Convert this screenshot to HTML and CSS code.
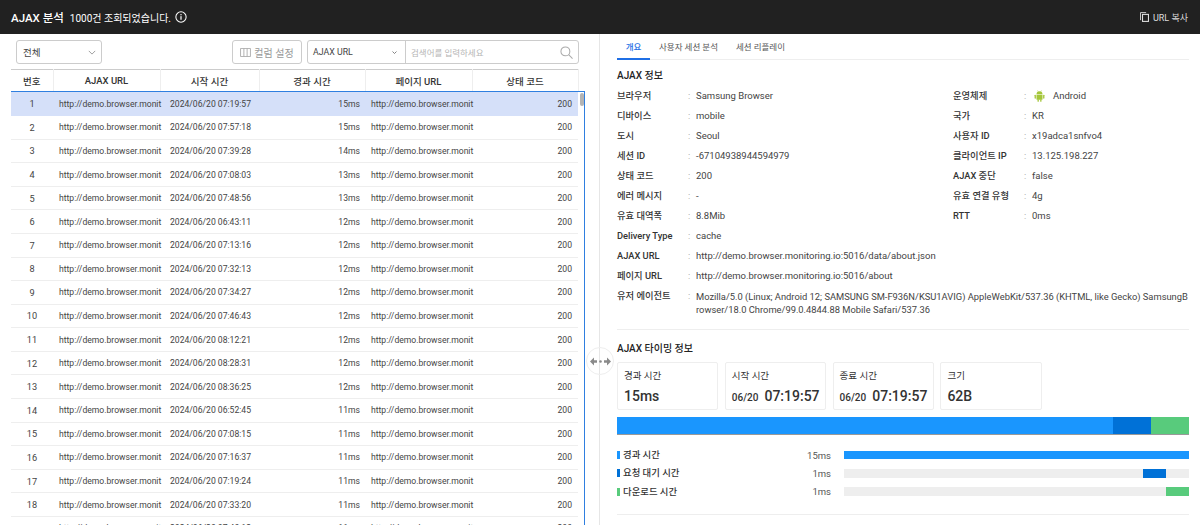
FILE: index.html
```html
<!DOCTYPE html>
<html lang="ko">
<head>
    <meta charset="UTF-8">
    <meta name="viewport" content="width=device-width, initial-scale=1.0">
    <title>AJAX 분석</title>
    <link rel="stylesheet" href="styles.css">
</head>
<body>
    <header class="topbar">
        <div class="topbar-left">
            <h1>AJAX 분석</h1>
            <span class="topbar-count">1000건 조회되었습니다.</span>
            <svg class="info-icon" viewBox="0 0 14 14" width="12" height="12"><circle cx="7" cy="7" r="6" fill="none" stroke="#fff" stroke-width="1.2"/><rect x="6.3" y="6" width="1.4" height="4.2" fill="#fff"/><rect x="6.3" y="3.6" width="1.4" height="1.4" fill="#fff"/></svg>
        </div>
        <button class="copy-button">
            <svg viewBox="0 0 10 11" width="9" height="10"><path d="M.6 9V.6h6.2" fill="none" stroke="#ddd" stroke-width="1"/><rect x="2.8" y="2.6" width="6.6" height="7.8" fill="none" stroke="#ddd" stroke-width="1.2"/></svg>
            URL 복사
        </button>
    </header>

    <div class="layout">
        <section class="left-pane">
            <div class="toolbar">
                <div class="select select-all">전체
                    <svg viewBox="0 0 10 6" width="8" height="5"><path d="M1 1l4 4 4-4" fill="none" stroke="#888"/></svg>
                </div>
                <button class="column-button">
                    <svg viewBox="0 0 12 10" width="11" height="9"><path d="M.5.5h11v9H.5zM4.2.5v9M7.8.5v9" fill="none" stroke="#aaa"/></svg>
                    컬럼 설정
                </button>
                <div class="search-group">
                    <div class="search-type">AJAX URL
                        <svg viewBox="0 0 10 6" width="5" height="3"><path d="M1 1l4 4 4-4" fill="none" stroke="#666" stroke-width="1.6"/></svg>
                    </div>
                    <div class="search-input">검색어를 입력하세요
                        <svg viewBox="0 0 14 14" width="13" height="13"><circle cx="5.8" cy="5.8" r="4.8" fill="none" stroke="#aaa" stroke-width="1.1"/><path d="M9.3 9.3l4.2 4.2" stroke="#aaa" stroke-width="1.1"/></svg>
                    </div>
                </div>
            </div>

            <div class="grid-wrap">
                <table class="grid-head">
                    <tr><th class="col-no">번호</th><th class="col-url">AJAX URL</th><th class="col-time">시작 시간</th><th class="col-ms">경과 시간</th><th class="col-url">페이지 URL</th><th class="col-code">상태 코드</th></tr>
                </table>
                <div class="grid-body">
                    <table class="grid-rows">
                        <tr class="selected"><td class="col-no">1</td><td class="col-url">http://demo.browser.monit</td><td class="col-time">2024/06/20 07:19:57</td><td class="col-ms">15ms</td><td class="col-url">http://demo.browser.monit</td><td class="col-code">200</td></tr>
                        <tr><td class="col-no">2</td><td class="col-url">http://demo.browser.monit</td><td class="col-time">2024/06/20 07:57:18</td><td class="col-ms">15ms</td><td class="col-url">http://demo.browser.monit</td><td class="col-code">200</td></tr>
                        <tr><td class="col-no">3</td><td class="col-url">http://demo.browser.monit</td><td class="col-time">2024/06/20 07:39:28</td><td class="col-ms">14ms</td><td class="col-url">http://demo.browser.monit</td><td class="col-code">200</td></tr>
                        <tr><td class="col-no">4</td><td class="col-url">http://demo.browser.monit</td><td class="col-time">2024/06/20 07:08:03</td><td class="col-ms">13ms</td><td class="col-url">http://demo.browser.monit</td><td class="col-code">200</td></tr>
                        <tr><td class="col-no">5</td><td class="col-url">http://demo.browser.monit</td><td class="col-time">2024/06/20 07:48:56</td><td class="col-ms">13ms</td><td class="col-url">http://demo.browser.monit</td><td class="col-code">200</td></tr>
                        <tr><td class="col-no">6</td><td class="col-url">http://demo.browser.monit</td><td class="col-time">2024/06/20 06:43:11</td><td class="col-ms">12ms</td><td class="col-url">http://demo.browser.monit</td><td class="col-code">200</td></tr>
                        <tr><td class="col-no">7</td><td class="col-url">http://demo.browser.monit</td><td class="col-time">2024/06/20 07:13:16</td><td class="col-ms">12ms</td><td class="col-url">http://demo.browser.monit</td><td class="col-code">200</td></tr>
                        <tr><td class="col-no">8</td><td class="col-url">http://demo.browser.monit</td><td class="col-time">2024/06/20 07:32:13</td><td class="col-ms">12ms</td><td class="col-url">http://demo.browser.monit</td><td class="col-code">200</td></tr>
                        <tr><td class="col-no">9</td><td class="col-url">http://demo.browser.monit</td><td class="col-time">2024/06/20 07:34:27</td><td class="col-ms">12ms</td><td class="col-url">http://demo.browser.monit</td><td class="col-code">200</td></tr>
                        <tr><td class="col-no">10</td><td class="col-url">http://demo.browser.monit</td><td class="col-time">2024/06/20 07:46:43</td><td class="col-ms">12ms</td><td class="col-url">http://demo.browser.monit</td><td class="col-code">200</td></tr>
                        <tr><td class="col-no">11</td><td class="col-url">http://demo.browser.monit</td><td class="col-time">2024/06/20 08:12:21</td><td class="col-ms">12ms</td><td class="col-url">http://demo.browser.monit</td><td class="col-code">200</td></tr>
                        <tr><td class="col-no">12</td><td class="col-url">http://demo.browser.monit</td><td class="col-time">2024/06/20 08:28:31</td><td class="col-ms">12ms</td><td class="col-url">http://demo.browser.monit</td><td class="col-code">200</td></tr>
                        <tr><td class="col-no">13</td><td class="col-url">http://demo.browser.monit</td><td class="col-time">2024/06/20 08:36:25</td><td class="col-ms">12ms</td><td class="col-url">http://demo.browser.monit</td><td class="col-code">200</td></tr>
                        <tr><td class="col-no">14</td><td class="col-url">http://demo.browser.monit</td><td class="col-time">2024/06/20 06:52:45</td><td class="col-ms">11ms</td><td class="col-url">http://demo.browser.monit</td><td class="col-code">200</td></tr>
                        <tr><td class="col-no">15</td><td class="col-url">http://demo.browser.monit</td><td class="col-time">2024/06/20 07:08:15</td><td class="col-ms">11ms</td><td class="col-url">http://demo.browser.monit</td><td class="col-code">200</td></tr>
                        <tr><td class="col-no">16</td><td class="col-url">http://demo.browser.monit</td><td class="col-time">2024/06/20 07:16:37</td><td class="col-ms">11ms</td><td class="col-url">http://demo.browser.monit</td><td class="col-code">200</td></tr>
                        <tr><td class="col-no">17</td><td class="col-url">http://demo.browser.monit</td><td class="col-time">2024/06/20 07:19:24</td><td class="col-ms">11ms</td><td class="col-url">http://demo.browser.monit</td><td class="col-code">200</td></tr>
                        <tr><td class="col-no">18</td><td class="col-url">http://demo.browser.monit</td><td class="col-time">2024/06/20 07:33:20</td><td class="col-ms">11ms</td><td class="col-url">http://demo.browser.monit</td><td class="col-code">200</td></tr>
                        <tr><td class="col-no">19</td><td class="col-url">http://demo.browser.monit</td><td class="col-time">2024/06/20 07:40:12</td><td class="col-ms">11ms</td><td class="col-url">http://demo.browser.monit</td><td class="col-code">200</td></tr>
                    </table>
                    <div class="scroll-thumb"></div>
                </div>
            </div>
        </section>

        <div class="splitter">
            <div class="splitter-handle">
                <svg viewBox="0 0 21 9" width="21" height="9"><path d="M0 4.5l4-4v2.7h3v2.6H4v2.7zM21 4.5l-4-4v2.7h-3v2.6h3v2.7z" fill="#8a8a8a"/><circle cx="10.5" cy="4.5" r="1.3" fill="#8a8a8a"/></svg>
            </div>
        </div>

        <section class="right-pane">
            <nav class="tabs">
                <a class="tab active">개요</a>
                <a class="tab">사용자 세션 분석</a>
                <a class="tab">세션 리플레이</a>
            </nav>

            <h2 class="section-title">AJAX 정보</h2>
            <div class="info-grid">
                <div class="info-row"><span class="info-label">브라우저</span><span class="info-value">Samsung Browser</span></div>
                <div class="info-row"><span class="info-label">운영체제</span><span class="info-value">
                    <svg class="android-icon" viewBox="0 0 16 18" width="11" height="12"><path d="M5 .6l1.2 2M11 .6L9.8 2.6" stroke="#a4c639" stroke-width=".7"/><path d="M3.5 6.2a4.5 4.5 0 0 1 9 0z" fill="#a4c639"/><path d="M3.5 7h9v6.8a1 1 0 0 1-1 1h-7a1 1 0 0 1-1-1z" fill="#a4c639"/><rect x="0.6" y="7" width="2" height="6" rx="1" fill="#a4c639"/><rect x="13.4" y="7" width="2" height="6" rx="1" fill="#a4c639"/><rect x="5" y="14" width="2" height="3.8" rx="1" fill="#a4c639"/><rect x="9" y="14" width="2" height="3.8" rx="1" fill="#a4c639"/></svg>
                    Android</span></div>
                <div class="info-row"><span class="info-label">디바이스</span><span class="info-value">mobile</span></div>
                <div class="info-row"><span class="info-label">국가</span><span class="info-value">KR</span></div>
                <div class="info-row"><span class="info-label">도시</span><span class="info-value">Seoul</span></div>
                <div class="info-row"><span class="info-label">사용자 ID</span><span class="info-value">x19adca1snfvo4</span></div>
                <div class="info-row"><span class="info-label">세션 ID</span><span class="info-value">-67104938944594979</span></div>
                <div class="info-row"><span class="info-label">클라이언트 IP</span><span class="info-value">13.125.198.227</span></div>
                <div class="info-row"><span class="info-label">상태 코드</span><span class="info-value">200</span></div>
                <div class="info-row"><span class="info-label">AJAX 중단</span><span class="info-value">false</span></div>
                <div class="info-row"><span class="info-label">에러 메시지</span><span class="info-value">-</span></div>
                <div class="info-row"><span class="info-label">유효 연결 유형</span><span class="info-value">4g</span></div>
                <div class="info-row"><span class="info-label">유효 대역폭</span><span class="info-value">8.8Mib</span></div>
                <div class="info-row"><span class="info-label">RTT</span><span class="info-value">0ms</span></div>
                <div class="info-row wide"><span class="info-label">Delivery Type</span><span class="info-value">cache</span></div>
                <div class="info-row wide"><span class="info-label">AJAX URL</span><span class="info-value">http://demo.browser.monitoring.io:5016/data/about.json</span></div>
                <div class="info-row wide"><span class="info-label">페이지 URL</span><span class="info-value">http://demo.browser.monitoring.io:5016/about</span></div>
                <div class="info-row wide"><span class="info-label">유저 에이전트</span><span class="info-value break">Mozilla/5.0 (Linux; Android 12; SAMSUNG SM-F936N/KSU1AVIG) AppleWebKit/537.36 (KHTML, like Gecko) SamsungBrowser/18.0 Chrome/99.0.4844.88 Mobile Safari/537.36</span></div>
            </div>

            <h2 class="section-title timing-title">AJAX 타이밍 정보</h2>
            <div class="stat-cards">
                <div class="stat-card"><div class="stat-label">경과 시간</div><div class="stat-value">15ms</div></div>
                <div class="stat-card"><div class="stat-label">시작 시간</div><div class="stat-value"><small>06/20</small>07:19:57</div></div>
                <div class="stat-card"><div class="stat-label">종료 시간</div><div class="stat-value"><small>06/20</small>07:19:57</div></div>
                <div class="stat-card"><div class="stat-label">크기</div><div class="stat-value">62B</div></div>
            </div>

            <div class="stack-bar">
                <div class="seg seg-total"></div>
                <div class="seg seg-wait"></div>
                <div class="seg seg-down"></div>
            </div>

            <div class="timing-row">
                <span class="timing-name mark-total">경과 시간</span><span class="timing-ms">15ms</span>
                <div class="track"><div class="fill seg-total" style="left:0;width:100%"></div></div>
            </div>
            <div class="timing-row">
                <span class="timing-name mark-wait">요청 대기 시간</span><span class="timing-ms">1ms</span>
                <div class="track"><div class="fill seg-wait" style="left:86.6%;width:6.7%"></div></div>
            </div>
            <div class="timing-row">
                <span class="timing-name mark-down">다운로드 시간</span><span class="timing-ms">1ms</span>
                <div class="track"><div class="fill seg-down" style="left:93.4%;width:6.6%"></div></div>
            </div>
            <div class="bottom-rule"></div>
        </section>
    </div>
</body>
</html>
```

FILE: styles.css
```css
* {
    box-sizing: border-box;
}

html, body {
    height: 525px;
    overflow: hidden;
}

body {
    margin: 0;
    font-family: Roboto, "Noto Sans CJK KR", sans-serif;
    font-size: 9.5px;
    color: #333;
    background: #fff;
}

/* top bar */
.topbar {
    height: 34px;
    background: #212121;
    color: #fff;
    padding: 0 12px 0 11px;
    display: flex;
    justify-content: space-between;
    align-items: center;
}

.topbar-left {
    display: flex;
    align-items: center;
}

.topbar h1 {
    margin: 0 6px 0 0;
    font-size: 11.5px;
    font-weight: 500;
}

.topbar-count {
    font-size: 10px;
    margin-right: 4px;
}

.info-icon {
    display: block;
}

.copy-button {
    display: flex;
    align-items: center;
    gap: 4px;
    background: none;
    border: 0;
    padding: 0;
    color: #ddd;
    font: inherit;
    font-size: 9px;
}

/* layout */
.layout {
    display: flex;
    height: 491px;
}

.left-pane {
    width: 585px;
    flex: none;
}

.toolbar {
    display: flex;
    align-items: flex-start;
    height: 35px;
    padding: 6px 5px 0 16px;
}

.select,
.column-button,
.search-group {
    height: 24px;
    border: 1px solid #ccc;
    border-radius: 3px;
    background: #fff;
}

.select-all {
    width: 86px;
    display: flex;
    align-items: center;
    justify-content: space-between;
    padding: 0 5px 0 6px;
    margin-right: 130px;
    color: #444;
}

.column-button {
    width: 70px;
    display: flex;
    align-items: center;
    justify-content: center;
    gap: 3px;
    padding: 0;
    margin-right: 5px;
    font: inherit;
    font-size: 10px;
    color: #999;
}

.search-group {
    width: 272px;
    display: flex;
}

.search-type {
    width: 98px;
    display: flex;
    align-items: center;
    justify-content: space-between;
    padding: 0 8px 0 5px;
    border-right: 1px solid #ccc;
    color: #444;
    font-size: 8.8px;
}

.search-input {
    flex: 1;
    display: flex;
    align-items: center;
    justify-content: space-between;
    padding: 0 5px;
    color: #b5b5b5;
    font-size: 8.5px;
}

/* grid */
.grid-wrap {
    margin: 0 0 0 11px;
    height: 456px;
    display: flex;
    flex-direction: column;
}

table {
    table-layout: fixed;
    border-collapse: collapse;
    width: 567px;
}

.col-no { width: 42px; }
.col-url { width: 107px; }
.col-time { width: 99px; }
.col-ms { width: 106px; }
.col-code { width: 106px; }

.grid-head {
    border-top: 1px solid #ccc;
    height: 22px;
}

.grid-head th {
    padding: 0;
    font-size: 9.5px;
    font-weight: 500;
    color: #333;
    text-align: center;
    border-right: 1px solid #eee;
}

.grid-body {
    position: relative;
    flex: 1;
    overflow: hidden;
    border-top: 1px solid #2f7fe0;
    border-right: 1px solid #2f7fe0;
    width: 574px;
}

.grid-rows td {
    height: 23.58px;
    padding: 0 6px;
    font-size: 8.6px;
    white-space: nowrap;
    border-bottom: 1px solid #eee;
    color: #444;
}

.grid-rows .col-no {
    text-align: center;
    font-size: 9.2px;
}

.grid-rows .col-ms,
.grid-rows .col-code {
    text-align: right;
}

.grid-rows .col-ms {
    padding-right: 5px;
}

.grid-rows .col-time {
    padding-left: 10px;
    padding-right: 0;
}

.grid-rows .selected td {
    background: #d5e0f9;
    border-bottom-color: #d5e0f9;
}

.scroll-thumb {
    position: absolute;
    top: 1px;
    right: 0;
    width: 4px;
    height: 13px;
    background: #b4b4b4;
    border-radius: 2px;
}

/* splitter between panes */
.splitter {
    position: relative;
    width: 15px;
    flex: none;
    border-right: 1px solid #e6e6e6;
}

.splitter-handle {
    position: absolute;
    left: 1px;
    top: 313px;
    width: 28px;
    height: 28px;
    border: 1px solid #eee;
    border-radius: 50%;
    display: flex;
    align-items: center;
    justify-content: center;
}

/* right pane */
.right-pane {
    flex: 1;
    padding: 0 11px 0 17px;
}

.tabs {
    display: flex;
    height: 26px;
    border-bottom: 1px solid #eee;
}

.tab {
    height: 26px;
    line-height: 26px;
    padding: 0 9px;
    color: #555;
    font-size: 8.5px;
}

.tab.active {
    width: 33px;
    padding: 0;
    text-align: center;
    color: #1f6fe5;
    font-weight: 500;
    border-bottom: 2px solid #1f6fe5;
}

.section-title {
    margin: 0;
    font-size: 10px;
    font-weight: 500;
    color: #222;
}

.tabs + .section-title {
    margin-top: 9px;
    margin-bottom: 3px;
    line-height: 14px;
}

.info-grid {
    display: grid;
    grid-template-columns: 336px 1fr;
    grid-auto-rows: minmax(20px, auto);
    padding-bottom: 13px;
    border-bottom: 1px solid #eee;
}

.info-row {
    display: flex;
    line-height: 20px;
}

.info-row.wide {
    grid-column: 1 / -1;
}

.info-label {
    width: 79px;
    flex: none;
    position: relative;
    font-size: 9.3px;
    font-weight: 500;
    color: #333;
}

.info-label::after {
    content: ":";
    position: absolute;
    left: 71px;
    color: #aaa;
    font-weight: 400;
}

.info-value {
    display: flex;
    align-items: center;
    color: #444;
}

.info-value.break {
    display: block;
    font-size: 9.35px;
    line-height: 13px;
    padding-top: 4px;
    word-break: break-all;
}

.android-icon {
    margin: 0 8px 0 2px;
}

.timing-title {
    margin-top: 12px;
    margin-bottom: 6px;
    line-height: 14px;
}

.stat-cards {
    display: flex;
    gap: 6.5px;
    margin-bottom: 7px;
}

.stat-card {
    width: 101.3px;
    height: 48px;
    padding: 6px 6px;
    border: 1px solid #eee;
    border-radius: 2px;
}

.stat-label {
    font-size: 9.5px;
    line-height: 14px;
    margin-bottom: 4px;
}

.stat-value {
    font-size: 14px;
    font-weight: 500;
    line-height: 18px;
    color: #333;
    white-space: nowrap;
}

.stat-value small {
    font-size: 10px;
    margin-right: 6px;
}

.stack-bar {
    display: flex;
    height: 18px;
    border-bottom: 1px solid #999;
    margin-bottom: 11px;
}

.seg-total { background: #1a96fe; }
.seg-wait { background: #0071d7; }
.seg-down { background: #58cb7c; }

.stack-bar .seg-total { width: 495.5px; }
.stack-bar .seg-wait { width: 38px; }
.stack-bar .seg-down { flex: 1; }

.timing-row {
    display: flex;
    align-items: center;
    height: 18.3px;
}

.timing-name {
    width: 150px;
    padding-left: 3px;
    font-size: 9.4px;
    font-weight: 500;
    border-left: 3px solid;
    line-height: 8px;
    flex: none;
    white-space: nowrap;
}

.mark-total { border-color: #1a96fe; }
.mark-wait { border-color: #0071d7; }
.mark-down { border-color: #58cb7c; }

.timing-ms {
    width: 64px;
    flex: none;
    text-align: right;
    color: #555;
}

.track {
    position: relative;
    flex: 1;
    height: 8.5px;
    margin-left: 12.5px;
    background: #eee;
}

.fill {
    position: absolute;
    top: 0;
    bottom: 0;
}

.bottom-rule {
    margin-top: 13px;
    border-bottom: 1px solid #eee;
}
```
